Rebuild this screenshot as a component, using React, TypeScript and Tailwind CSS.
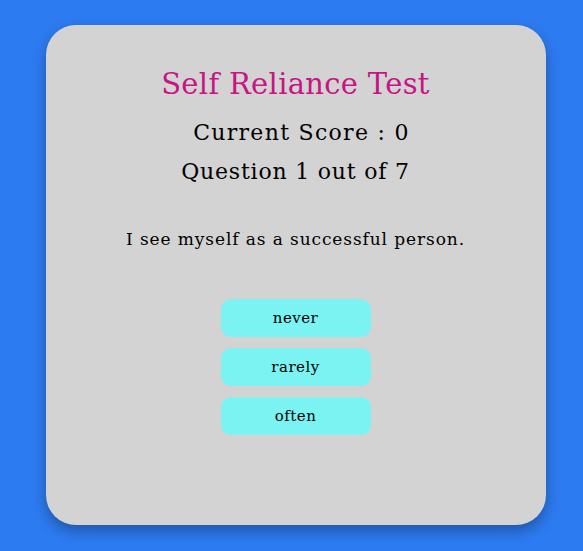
import React from 'react';

interface OptionButtonProps {
  label: string;
}

const OptionButton: React.FC<OptionButtonProps> = ({ label }) => (
  <button className="w-[150px] h-[38px] rounded-[10px] bg-[#7af3f2] text-[15px] tracking-[0.5px] text-black">
    {label}
  </button>
);

const App: React.FC = () => {
  const options = ['never', 'rarely', 'often'];
  return (
    <div
      className="w-full min-h-[551px] bg-[#2d7bf0] flex justify-center pt-[25px] pl-[8px]"
      style={{ fontFamily: '"DejaVu Serif", serif' }}
    >
      <div className="w-[500px] h-[500px] rounded-[30px] bg-[#d3d3d3] shadow-[0_6px_14px_rgba(0,0,0,0.3)] flex flex-col items-center pt-[39px]">
        <h1 className="text-[29px] leading-[40px] tracking-[0.3px] text-[#c71585]">Self Reliance Test</h1>
        <h2 className="mt-[13px] ml-[12px] text-[22px] leading-[32px] tracking-[1.3px] text-black">Current Score : 0</h2>
        <h2 className="mt-[7px] text-[22px] leading-[32px] tracking-[0.8px] text-black">Question 1 out of 7</h2>
        <p className="mt-[39px] text-[17px] leading-[24px] tracking-[0.9px] text-black">
          I see myself as a successful person.
        </p>
        <div className="mt-[48px] flex flex-col gap-[11px]">
          {options.map((o) => (
            <OptionButton key={o} label={o} />
          ))}
        </div>
      </div>
    </div>
  );
};

export default App;
